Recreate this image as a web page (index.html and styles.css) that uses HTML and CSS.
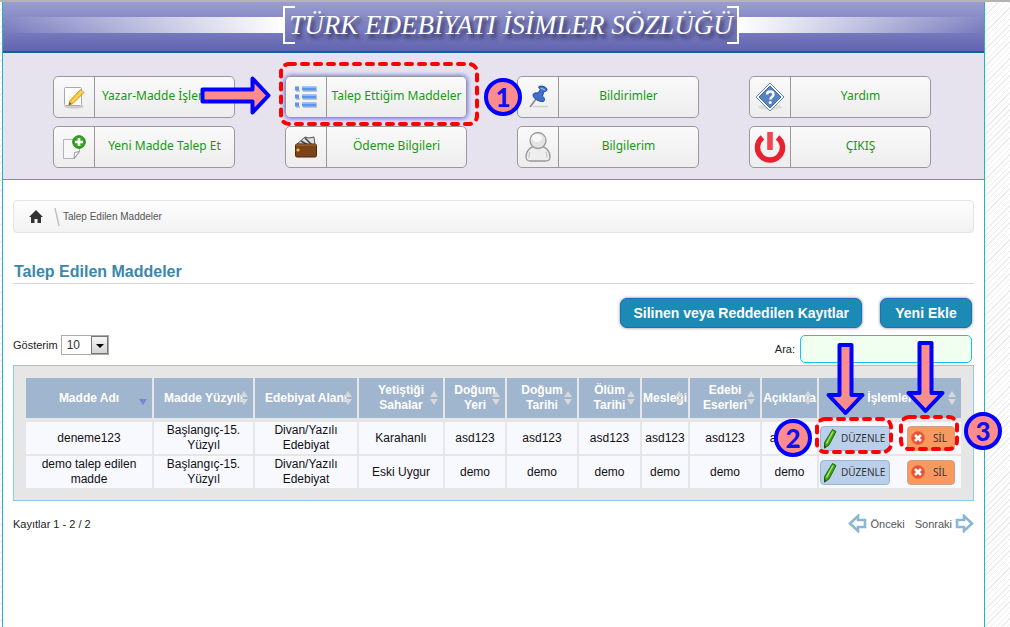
FILE: index.html
```html
<!DOCTYPE html>
<html lang="tr">
<head>
<meta charset="utf-8">
<title>Türk Edebiyatı İsimler Sözlüğü</title>
<link rel="stylesheet" href="styles.css">
</head>
<body>
<div class="page">
  <header class="banner">
    <span class="beam beam-left"></span>
    <h1 class="brand">TÜRK EDEBİYATI İSİMLER SÖZLÜĞÜ</h1>
    <span class="beam beam-right"></span>
  </header>

  <nav class="menu">
    <div class="menu-cell">
      <a class="menu-item" href="#">
        <span class="menu-icon"><svg width="24" height="26" viewBox="0 0 24 26"><ellipse cx="12" cy="22.500" rx="10" ry="2" fill="#ccc"/><rect x="2.500" y="3.500" width="17" height="18" rx="1" fill="#fcfcfc" stroke="#aaa"/><path d="M7.500 17L18.500 5.500l3.500 3L11 19.500l-4 1.500z" fill="#f6c531" stroke="#c08f1c" stroke-width=".8"/><path d="M10 18L20.500 7" stroke="#fde78d"/><path d="M7.500 18l2 2-2.700 1.200z" fill="#6b5030"/></svg></span>
        <span class="menu-label">Yazar-Madde İşlemleri</span>
      </a>
      <svg class="mark arrow-right" width="72" height="41" viewBox="0 0 72 41"><path d="M2.500 14.500h50v-11l16 17-16 17v-11h-50z" fill="#ff8c8c" stroke="#00f" stroke-width="4" stroke-linejoin="round"/></svg>
    </div>
    <div class="menu-cell">
      <a class="menu-item active" href="#">
        <span class="menu-icon"><svg width="24" height="24" viewBox="0 0 24 24"><g fill="#c3c5cb"><rect x="2" y="5" width="4" height="2"/><rect x="9" y="5" width="14" height="2"/><rect x="2" y="13" width="4" height="2"/><rect x="9" y="13" width="14" height="2"/><rect x="2" y="21" width="4" height="2"/><rect x="9" y="21" width="14" height="2"/></g><g fill="#5b95f3"><rect x="1" y="1.500" width="4" height="4"/><rect x="8" y="1.500" width="14.500" height="4"/><rect x="1" y="9.500" width="4" height="4"/><rect x="8" y="9.500" width="14.500" height="4"/><rect x="1" y="17.500" width="4" height="4"/><rect x="8" y="17.500" width="14.500" height="4"/></g><path d="M8 2.500h14M8 10.500h14M8 18.500h14" stroke="#8fbafa"/></svg></span>
        <span class="menu-label">Talep Ettiğim Maddeler</span>
      </a>
      <svg class="mark frame-menu" width="200" height="64" viewBox="0 0 200 64"><rect x="2" y="2" width="196" height="60" rx="8" class="dash"/></svg>
      <span class="mark badge badge-1">1</span>
    </div>
    <div class="menu-cell">
      <a class="menu-item" href="#">
        <span class="menu-icon"><svg width="26" height="26" viewBox="0 0 26 26"><path d="M8 22.500h15" stroke="#d0d0d0" stroke-width="1.500"/><path d="M11 15l-6 8" stroke="#888" stroke-width="1.500"/><path d="M14 2.500c3-1.500 8.500 1 8 3.500-.3 1.500-2 1.500-3 1.500l-1.500 4.500c2.500 2 3 5 .5 5.500-4 .5-10-3-10-6.500 0-2 3-2.500 5-2l2.500-3.500c-1.500-1-2.500-2-1.500-3z" fill="#3a6fcb" stroke="#274a94"/><path d="M15.500 4l4.500 2" stroke="#9dbdf2" stroke-width="1.300"/></svg></span>
        <span class="menu-label">Bildirimler</span>
      </a>
    </div>
    <div class="menu-cell">
      <a class="menu-item" href="#">
        <span class="menu-icon"><svg width="30" height="30" viewBox="0 0 30 30"><ellipse cx="15" cy="25" rx="12" ry="3" fill="#ddd"/><path d="M15 1l14 14-14 14L1 15z" fill="#fff" stroke="#5a83bd"/><path d="M15 4l11 11-11 11L4 15z" fill="#5683c4" stroke="#3e6aa8"/><path d="M12 12.500c0-4 6.500-4 6.500 0 0 2.500-3.200 2.500-3.200 5" fill="none" stroke="#fff" stroke-width="2.400"/><circle cx="15.200" cy="20.500" r="1.500" fill="#fff"/></svg></span>
        <span class="menu-label">Yardım</span>
      </a>
    </div>
    <div class="menu-cell">
      <a class="menu-item" href="#">
        <span class="menu-icon"><svg width="24" height="26" viewBox="0 0 24 26"><path d="M1.500 5.500h16v12l-5 7h-11z" fill="#f8f8f8" stroke="#b5b5b5"/><path d="M17.500 17.500l-5.500 7 .5-6z" fill="#fff" stroke="#999"/><circle cx="17" cy="8" r="6.300" fill="#35a81d" stroke="#238010"/><path d="M17 4v8M13 8h8" stroke="#fff" stroke-width="2.600"/></svg></span>
        <span class="menu-label">Yeni Madde Talep Et</span>
      </a>
    </div>
    <div class="menu-cell">
      <a class="menu-item" href="#">
        <span class="menu-icon"><svg width="24" height="24" viewBox="0 0 24 24"><path d="M3 9l8-7 4 1 5-1 1 8z" fill="#ddd" stroke="#555"/><path d="M7 6l7 4M11 3l7 7" stroke="#444" stroke-width="1.600"/><rect x="1.500" y="9" width="21" height="13" rx="1.500" fill="#7b4317" stroke="#4d270a"/><path d="M2 10h20" stroke="#a9713d"/><path d="M1 13h5v4H1z" fill="#5c300f"/><circle cx="4" cy="15" r="1.800" fill="#e9b533"/></svg></span>
        <span class="menu-label">Ödeme Bilgileri</span>
      </a>
    </div>
    <div class="menu-cell">
      <a class="menu-item" href="#">
        <span class="menu-icon"><svg width="28" height="32" viewBox="0 0 28 32"><path d="M2 26c0-6 4-11 12-11s12 5 12 11c0 3-2 4-4 4H6c-2 0-4-1-4-4z" fill="#eee" stroke="#999" stroke-width="1.300"/><circle cx="14" cy="9.500" r="8" fill="#e4e4e4" stroke="#999" stroke-width="1.300"/><ellipse cx="13" cy="7" rx="5" ry="4" fill="#f8f8f8"/><path d="M6 21c-1 2-1 4-1 6M22 21c1 2 1 4 1 6" stroke="#bbb" fill="none"/></svg></span>
        <span class="menu-label">Bilgilerim</span>
      </a>
    </div>
    <div class="menu-cell">
      <a class="menu-item" href="#">
        <span class="menu-icon"><svg width="32" height="32" viewBox="0 0 32 32"><path d="M8.500 6.500a12.500 12.500 0 1 0 15 0" fill="none" stroke="#e8202f" stroke-width="5.500"/><rect x="13.200" y="1" width="5.600" height="18" fill="#f04450"/></svg></span>
        <span class="menu-label">ÇIKIŞ</span>
      </a>
    </div>
  </nav>

  <main class="content">
    <div class="crumbs">
      <a href="#" class="home" aria-label="Ana sayfa"><svg width="14" height="13" viewBox="0 0 14 13"><path d="M7 0l7 7h-2v6H8.500V9h-3v4H2V7H0z" fill="#333"/></svg></a>
      <svg class="slash" width="6" height="18" viewBox="0 0 6 18"><path d="M1 0l4 18" stroke="#bbb" stroke-width="1.300"/></svg>
      <span>Talep Edilen Maddeler</span>
    </div>

    <h2 class="title">Talep Edilen Maddeler</h2>

    <div class="actions">
      <button type="button" class="primary">Silinen veya Reddedilen Kayıtlar</button>
      <button type="button" class="primary">Yeni Ekle</button>
    </div>

    <div class="filters">
      <div class="length">
        <label for="len">Gösterim</label>
        <span class="select-wrap">
          <select id="len"><option>10</option></select>
          <span class="drop"></span>
        </span>
      </div>
      <div class="search">
        <label for="q">Ara:</label>
        <input id="q" type="text">
      </div>
    </div>

    <div class="table-frame">
      <table>
        <colgroup><col class="c1"><col class="c2"><col class="c3"><col class="c4"><col class="c5"><col class="c6"><col class="c7"><col class="c8"><col class="c9"><col class="c10"><col class="c11"></colgroup>
        <thead>
          <tr>
            <th class="sorted">Madde Adı</th><th>Madde Yüzyılı</th><th>Edebiyat Alanı</th><th>Yetiştiği<br>Sahalar</th><th>Doğum<br>Yeri</th><th>Doğum<br>Tarihi</th><th>Ölüm<br>Tarihi</th><th>Mesleği</th><th>Edebi<br>Eserleri</th><th>Açıklama</th><th>İşlemler</th>
          </tr>
        </thead>
        <tbody>
          <tr>
            <td>deneme123</td><td>Başlangıç-15.<br>Yüzyıl</td><td>Divan/Yazılı<br>Edebiyat</td><td>Karahanlı</td><td>asd123</td><td>asd123</td><td>asd123</td><td>asd123</td><td>asd123</td><td>asd123</td>
            <td>
              <div class="ops">
                <button type="button" class="op edit"><svg width="14" height="21" viewBox="0 0 14 21"><path d="M9.500 1.500l3.500 2L6 17l-4.500 3.200L1.500 14.500z" fill="#3fa414" stroke="#1f6a08"/><path d="M10 3.500L3.500 15.500" stroke="#a8e27c" stroke-width="1.500"/><path d="M1.300 17l2 1.300-2 1.700z" fill="#333"/></svg>DÜZENLE</button>
                <button type="button" class="op delete"><svg width="14" height="14" viewBox="0 0 14 14"><circle cx="7" cy="7" r="6.500" fill="#e5502e" stroke="#f26a45"/><path d="M4 4l6 6M10 4l-6 6" stroke="#fff" stroke-width="2.600"/></svg>SİL</button>
              </div>
              <svg class="mark arrow-down first" width="41" height="75" viewBox="0 0 41 75"><path d="M14.500 3h12v50h11l-17 18-17-18h11z" fill="#ff8c8c" stroke="#00f" stroke-width="4" stroke-linejoin="round"/></svg>
              <svg class="mark arrow-down second" width="41" height="75" viewBox="0 0 41 75"><path d="M14.500 3h12v50h11l-17 18-17-18h11z" fill="#ff8c8c" stroke="#00f" stroke-width="4" stroke-linejoin="round"/></svg>
              <svg class="mark frame-edit" width="78" height="38" viewBox="0 0 78 38"><rect x="2" y="2" width="74" height="33" rx="8" class="dash"/></svg>
              <svg class="mark frame-delete" width="60" height="38" viewBox="0 0 60 38"><rect x="2" y="2" width="56" height="32" rx="8" class="dash"/></svg>
              <span class="mark badge badge-2">2</span>
              <span class="mark badge badge-3">3</span>
            </td>
          </tr>
          <tr>
            <td>demo talep edilen<br>madde</td><td>Başlangıç-15.<br>Yüzyıl</td><td>Divan/Yazılı<br>Edebiyat</td><td>Eski Uygur</td><td>demo</td><td>demo</td><td>demo</td><td>demo</td><td>demo</td><td>demo</td>
            <td>
              <div class="ops">
                <button type="button" class="op edit"><svg width="14" height="21" viewBox="0 0 14 21"><path d="M9.500 1.500l3.500 2L6 17l-4.500 3.200L1.500 14.500z" fill="#3fa414" stroke="#1f6a08"/><path d="M10 3.500L3.500 15.500" stroke="#a8e27c" stroke-width="1.500"/><path d="M1.300 17l2 1.300-2 1.700z" fill="#333"/></svg>DÜZENLE</button>
                <button type="button" class="op delete"><svg width="14" height="14" viewBox="0 0 14 14"><circle cx="7" cy="7" r="6.500" fill="#e5502e" stroke="#f26a45"/><path d="M4 4l6 6M10 4l-6 6" stroke="#fff" stroke-width="2.600"/></svg>SİL</button>
              </div>
            </td>
          </tr>
        </tbody>
      </table>
    </div>

    <div class="pager">
      <span class="info">Kayıtlar 1 - 2 / 2</span>
      <a href="#"><svg width="19" height="19" viewBox="0 0 19 19"><path d="M10 2L2 9.500l8 7.500v-4h7V6h-7z" fill="#fff" stroke="#8ab8d4" stroke-width="2.600"/></svg>Önceki</a>
      <a href="#">Sonraki<svg width="19" height="19" viewBox="0 0 19 19"><path d="M9 2l8 7.500L9 17v-4H2V6h7z" fill="#fff" stroke="#8ab8d4" stroke-width="2.600"/></svg></a>
    </div>
  </main>
</div>
</body>
</html>
```
FILE: styles.css
```css
* { box-sizing: border-box; }

html { min-height: 100%; }

body {
  margin: 0;
  min-height: 100vh;
  display: flex;
  padding: 0 25px 0 2px;
  border-top: 2px solid #b4b4b4;
  background: repeating-linear-gradient(135deg, #fff 0 3px, #ececec 3px 4px);
  font-family: "Liberation Sans", Arial, sans-serif;
  font-size: 11px;
  color: #222;
}

a { color: inherit; text-decoration: none; }

.page {
  flex: 1;
  min-width: 0;
  background: #fff;
  border: solid #1db4c0;
  border-width: 0 1px;
}

.banner {
  display: flex;
  align-items: center;
  height: 51px;
  padding-bottom: 4px;
  border-bottom: 2px solid #0a639c;
  background: linear-gradient(#9a9dd0, #6164b0);
}

.beam { height: 16px; }
.beam-left { flex: 8; background: linear-gradient(90deg, transparent, #fff); }
.beam-right { flex: 7; background: linear-gradient(270deg, transparent, #fff); }

.brand {
  position: relative;
  margin: 0;
  height: 38px;
  padding: 0 6px;
  line-height: 38px;
  font-family: "Liberation Serif", "Times New Roman", serif;
  font-size: 27px;
  font-style: italic;
  font-weight: 400;
  white-space: nowrap;
  color: #fff;
  text-shadow: 3px 4px 4px rgba(20, 20, 60, .8);
}

.brand::before,
.brand::after {
  content: "";
  position: absolute;
  top: 0;
  bottom: 0;
  width: 10px;
  border: 2px solid #fff;
}
.brand::before { left: 0; border-right: 0; }
.brand::after { right: 0; border-left: 0; }

.menu {
  display: grid;
  grid-template-columns: repeat(4, 1fr);
  row-gap: 8px;
  padding: 23px 28px 11px 25px;
  border-bottom: 1px solid #1db4c0;
  background: #e6e3ef;
}

.menu-cell {
  position: relative;
  width: 182px;
  justify-self: center;
}

.menu-item {
  display: flex;
  height: 42px;
  border: 1px solid #999;
  border-radius: 5px;
  background: linear-gradient(#fafafa, #ededed);
}
.menu-item.active { box-shadow: 0 0 4px 1px #7777ee; }

.menu-icon {
  display: flex;
  align-items: center;
  justify-content: center;
  width: 41px;
  border-right: 1px solid #999;
}

.menu-label {
  flex: 1;
  line-height: 38px;
  text-align: center;
  white-space: nowrap;
  overflow: hidden;
  font-family: "Noto Sans", "Open Sans", sans-serif;
  font-size: 12px;
  color: #149a14;
}

.mark { position: absolute; z-index: 2; pointer-events: none; }
.dash { fill: none; stroke: #f00; stroke-width: 4; stroke-dasharray: 6 7; stroke-linecap: round; }

.badge {
  width: 38px;
  height: 38px;
  border: 4px solid #00f;
  border-radius: 50%;
  background: #ff8c8c;
  color: #11e;
  font: 900 26px/30px Lato, sans-serif;
  text-align: center;
}

.arrow-right { left: 147px; top: -1px; }
.frame-menu { left: -6px; top: -14px; }
.badge-1 { left: 199px; top: 2px; }
.arrow-down.first { left: 6px; top: -80px; }
.arrow-down.second { left: 86px; top: -82px; }
.frame-edit { left: -4px; top: -5px; }
.frame-delete { left: 80px; top: -7px; }
.badge-2 { left: -45px; top: -3px; }
.badge-3 { left: 145px; top: -10px; }

.content { padding: 20px 10px; }

.crumbs {
  display: flex;
  align-items: center;
  height: 33px;
  padding: 0 15px;
  border: 1px solid #e4e4e4;
  border-radius: 4px;
  background: linear-gradient(#fdfdfd, #f2f2f2);
  font-size: 10px;
  color: #555;
}
.home { display: flex; }
.slash { margin: 0 3px 0 11px; }

.title {
  margin: 29px 0 0;
  padding: 0 1px 1px;
  border-bottom: 1px solid #d8d8d8;
  font-size: 16px;
  line-height: 20px;
  color: #3a87ad;
}

.actions {
  display: flex;
  justify-content: flex-end;
  gap: 18px;
  padding: 14px 2px 0 0;
}

.primary {
  min-width: 92px;
  height: 30px;
  padding: 0 12px;
  border: 1px solid #1a6fc0;
  border-radius: 7px;
  background: #1b8ab5;
  box-shadow: 0 0 3px #777;
  color: #fff;
  font: 700 14px "Liberation Sans", Arial, sans-serif;
}

.filters {
  display: flex;
  justify-content: space-between;
  align-items: flex-start;
  padding: 7px 2px 2px 0;
}

.length { display: flex; align-items: center; gap: 3px; }
.select-wrap { display: flex; position: relative; }
.select-wrap select {
  appearance: none;
  width: 48px;
  height: 20px;
  padding: 0 5px;
  border: 1px solid #aaa;
  border-radius: 0;
  background: #fff;
  font: 12px "Liberation Sans", Arial, sans-serif;
  color: #333;
}
.drop {
  position: absolute;
  top: 1px;
  right: 1px;
  width: 17px;
  height: 18px;
  border: 1px solid #777;
  background: linear-gradient(#f6f6f6, #d4d4d4);
  pointer-events: none;
}
.drop::after {
  content: "";
  position: absolute;
  left: 4px;
  top: 7px;
  border: 4px solid transparent;
  border-top-color: #000;
  border-bottom: 0;
}

.search { display: flex; align-items: center; gap: 5px; }
.search input {
  width: 172px;
  height: 28px;
  padding: 0 6px;
  border: 1px solid #12c4f0;
  border-radius: 5px;
  background: #f0fff0;
}

.table-frame {
  padding: 10px;
  border: 1px solid #87ceeb;
  background: #e6e6e6;
}

table {
  width: 100%;
  table-layout: fixed;
  border-collapse: separate;
  border-spacing: 2px;
  font-size: 12px;
  line-height: 15px;
  text-align: center;
}

.c1 { width: 126px; }
.c2 { width: 99px; }
.c3 { width: 102px; }
.c4 { width: 84px; }
.c5 { width: 60px; }
.c6 { width: 70px; }
.c7 { width: 61px; }
.c8 { width: 46px; }
.c9 { width: 70px; }
.c10 { width: 55px; }
.c11 { width: 142px; }

th, td { position: relative; padding: 0; white-space: nowrap; }

th {
  height: 42px;
  border-bottom: 2px solid #e6e6e6;
  background: #a0b5ce;
  background-clip: padding-box;
  color: #fff;
}
th::before,
th::after {
  content: "";
  position: absolute;
  right: 5px;
  border: 4px solid transparent;
}
th::before { top: 13px; border-top: 0; border-bottom: 6px solid #d8d8d8; }
th::after { top: 21px; border-bottom: 0; border-top: 6px solid #d8d8d8; }
th.sorted::before { content: none; }
th.sorted::after { border-top-color: #7a80dc; }

td { height: 32px; background: #f8f8ff; color: #111; }

.ops { display: flex; align-items: center; justify-content: space-between; padding: 0 6px 0 1px; }

.op {
  display: flex;
  align-items: center;
  height: 25px;
  border: 1px solid #9fb3d0;
  border-radius: 4px;
  color: #333;
  font: 10px "Noto Sans", "Open Sans", sans-serif;
}
.op svg { flex: none; }
.edit { gap: 4px; padding: 0 4px 0 2px; background: #bacfea; }
.delete { gap: 8px; padding: 0 7px 0 3px; border-color: #c9a28b; background: #f89a60; }

.pager {
  display: flex;
  align-items: center;
  gap: 10px;
  padding-top: 13px;
  color: #555;
}
.pager .info { margin-right: auto; color: #222; }
.pager a { display: flex; align-items: center; gap: 3px; }
```
